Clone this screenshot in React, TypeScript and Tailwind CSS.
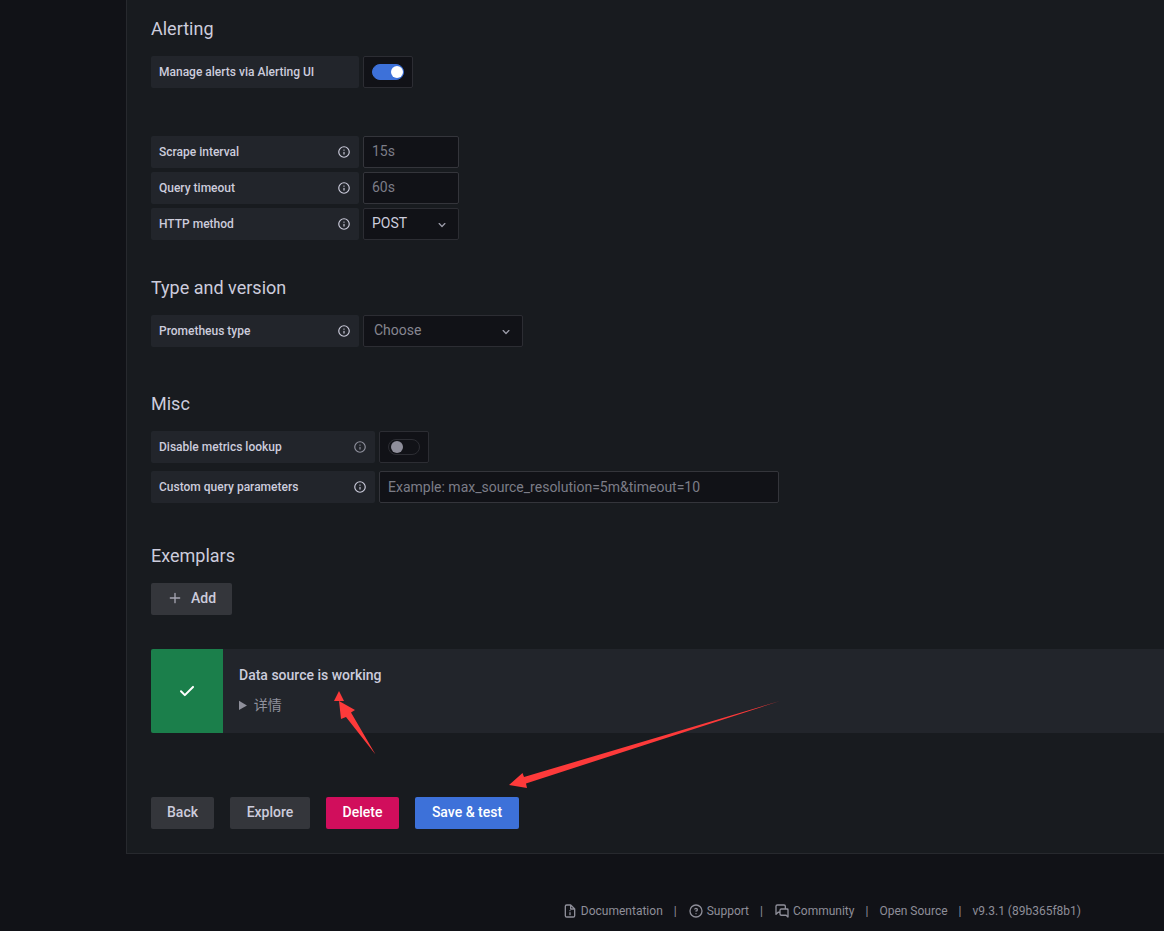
import type { ReactNode } from "react";

const ICONS = {
  info: "M12,2A10,10,0,1,0,22,12,10,10,0,0,0,12,2Zm0,18a8,8,0,1,1,8-8A8,8,0,0,1,12,20Zm0-8.5a1,1,0,0,0-1,1v3a1,1,0,0,0,2,0v-3A1,1,0,0,0,12,11.5Zm0-4a1.25,1.25,0,1,0,1.25,1.25A1.25,1.25,0,0,0,12,7.5Z",
  angleDown:
    "M17,9.17a1,1,0,0,0-1.41,0L12,12.71,8.46,9.17a1,1,0,0,0-1.41,0,1,1,0,0,0,0,1.42l4.24,4.24a1,1,0,0,0,1.42,0L17,10.59A1,1,0,0,0,17,9.17Z",
  plus: "M19,11H13V5a1,1,0,0,0-2,0v6H5a1,1,0,0,0,0,2h6v6a1,1,0,0,0,2,0V13h6a1,1,0,0,0,0-2Z",
  check:
    "M18.71,7.21a1,1,0,0,0-1.42,0L9.84,14.67,6.71,11.53A1,1,0,1,0,5.29,13l3.84,3.84a1,1,0,0,0,1.42,0l8.16-8.16A1,1,0,0,0,18.71,7.21Z",
  question:
    "M11.29,15.29a1.58,1.58,0,0,0-.12.15.76.76,0,0,0-.09.18.64.64,0,0,0-.06.18,1.36,1.36,0,0,0,0,.2.84.84,0,0,0,.08.38.9.9,0,0,0,.54.54.94.94,0,0,0,.76,0,.9.9,0,0,0,.54-.54A1,1,0,0,0,13,16a1,1,0,0,0-.29-.71A1,1,0,0,0,11.29,15.29ZM12,2A10,10,0,1,0,22,12,10,10,0,0,0,12,2Zm0,18a8,8,0,1,1,8-8A8,8,0,0,1,12,20ZM12,7A3,3,0,0,0,9.4,8.5a1,1,0,1,0,1.73,1A1,1,0,0,1,12,9a1,1,0,0,1,0,2,1,1,0,1,0,0,2,3,3,0,0,0,0-6Z",
  comments:
    "M20,8H18V5a3,3,0,0,0-3-3H5A3,3,0,0,0,2,5V17a1,1,0,0,0,.62.92A.84.84,0,0,0,3,18a1,1,0,0,0,.71-.29l2.81-2.82H8v1.44a3,3,0,0,0,3,3h6.92l2.37,2.38A1,1,0,0,0,21,22a.84.84,0,0,0,.38-.08A1,1,0,0,0,22,21V10A2,2,0,0,0,20,8ZM8,11v1.89H6.11a1,1,0,0,0-.71.29L4,14.59V5A1,1,0,0,1,5,4H15a1,1,0,0,1,1,1V8H11A3,3,0,0,0,8,11Zm12,7.59-1-1a1,1,0,0,0-.71-.3H11a1,1,0,0,1-1-1V11a1,1,0,0,1,1-1h8a1,1,0,0,1,1,1Z",
  fileInfo:
    "M20,8.94a1.31,1.31,0,0,0-.06-.27l0-.09a1.07,1.07,0,0,0-.19-.28h0l-6-6h0a1.07,1.07,0,0,0-.28-.19l-.1,0A1.1,1.1,0,0,0,13.06,2H7A3,3,0,0,0,4,5V19a3,3,0,0,0,3,3H17a3,3,0,0,0,3-3V9S20,9,20,8.94ZM14,5.41,16.59,8H14ZM18,19a1,1,0,0,1-1,1H7a1,1,0,0,1-1-1V5A1,1,0,0,1,7,4h5V9a1,1,0,0,0,1,1h5ZM12,10.500a1,1,0,1,0,1,1A1,1,0,0,0,12,10.500ZM12,13.500a1,1,0,0,0-1,1v3a1,1,0,0,0,2,0v-3A1,1,0,0,0,12,13.500Z",
};

function Icon({ name, className }: { name: keyof typeof ICONS; className: string }) {
  return (
    <svg viewBox="0 0 24 24" fill="currentColor" aria-hidden="true" className={className}>
      <path d={ICONS[name]} />
    </svg>
  );
}

function Heading({ children }: { children: ReactNode }) {
  return <h3 className="mb-4 text-lg leading-[22px]">{children}</h3>;
}

type FieldProps = {
  id: string;
  label: string;
  wide?: boolean;
  info?: boolean;
  dim?: boolean;
  children: ReactNode;
};

function Field({ id, label, wide, info, dim, children }: FieldProps) {
  return (
    <div className="flex gap-1">
      <label
        htmlFor={id}
        className={`flex h-8 shrink-0 items-center justify-between rounded-xs bg-[#22252b] px-2 text-xs font-medium ${
          wide ? "w-56" : "w-52"
        }`}
      >
        {label}
        {info && <Icon name="info" className={dim ? "size-3.5 opacity-65" : "size-3.5"} />}
      </label>
      {children}
    </div>
  );
}

function Switch({ id, on }: { id: string; on?: boolean }) {
  return (
    <div className="flex h-8 w-[50px] items-center justify-center rounded-xs border border-[#2c2d33] bg-[#111217]">
      <input
        id={id}
        type="checkbox"
        role="switch"
        defaultChecked={on}
        className="flex h-4 w-8 appearance-none items-center rounded-full border border-[#2c2d33] pl-0.5 before:size-3 before:rounded-full before:bg-[#8e8e9a] checked:justify-end checked:border-[#3d71d9] checked:bg-[#3d71d9] checked:before:bg-white"
      />
    </div>
  );
}

function TextInput({ id, placeholder, className }: { id: string; placeholder: string; className: string }) {
  return (
    <input
      id={id}
      type="text"
      placeholder={placeholder}
      className={`h-8 rounded-xs border border-[#34353b] bg-[#111217] px-2 text-sm placeholder:text-[#7c7d87] ${className}`}
    />
  );
}

function Select({ id, value, className }: { id: string; value: string; className: string }) {
  return (
    <div className="relative flex items-center">
      <select
        id={id}
        className={`h-8 appearance-none rounded-xs border border-[#2c2d33] bg-[#111217] pb-0.5 text-sm ${className}`}
      >
        <option>{value}</option>
      </select>
      <Icon name="angleDown" className="pointer-events-none absolute top-[9px] right-[9px] size-4 text-[#9b9ba8]" />
    </div>
  );
}

function Button({ className, children }: { className: string; children: ReactNode }) {
  return (
    <button type="button" className={`flex h-8 items-center justify-center rounded-xs pb-0.5 text-sm font-medium ${className}`}>
      {children}
    </button>
  );
}

function FooterLink({ icon, children }: { icon?: keyof typeof ICONS; children: ReactNode }) {
  return (
    <a href="#" className="flex items-center gap-[3px]">
      {icon && <Icon name={icon} className="size-4" />}
      {children}
    </a>
  );
}

// Red marker arrows drawn over the alert and the action buttons
function Arrows() {
  return (
    <svg
      viewBox="0 0 640 150"
      fill="#fd3a3a"
      aria-hidden="true"
      className="pointer-events-none absolute top-0 left-0 h-[150px] w-[640px]"
    >
      <path d="M188 42L193 52H183Z" />
      <path d="M188 52L204 61L200 63.500L224.500 105.500L195 68L190 70Z" />
      <path d="M358 136L371.500 124L373 128L629 52L375 134.500L376 139Z" />
    </svg>
  );
}

export default function App() {
  return (
    <div className="min-h-screen bg-[#111217] pl-[126px] font-[Roboto,'Noto_Sans_CJK_SC',sans-serif] text-[#ccccdc]">
      <main className="border-b border-l border-[#27292e] bg-[#181b1f] pt-[18px] pb-6 pl-6">
        <section>
          <Heading>Alerting</Heading>
          <Field id="manage-alerts" label="Manage alerts via Alerting UI">
            <Switch id="manage-alerts" on />
          </Field>
        </section>

        <section className="mt-12 flex flex-col gap-1">
          <Field id="scrape" label="Scrape interval" info>
            <TextInput id="scrape" placeholder="15s" className="w-24 pb-0.5" />
          </Field>
          <Field id="timeout" label="Query timeout" info>
            <TextInput id="timeout" placeholder="60s" className="w-24 pb-0.5" />
          </Field>
          <Field id="method" label="HTTP method" info>
            <Select id="method" value="POST" className="w-24 pl-2" />
          </Field>
        </section>

        <section className="mt-[37px]">
          <Heading>Type and version</Heading>
          <Field id="prom-type" label="Prometheus type" info>
            <Select id="prom-type" value="Choose" className="w-40 pl-2.5 text-[#868690]" />
          </Field>
        </section>

        <section className="mt-[46px]">
          <Heading>Misc</Heading>
          <div className="flex flex-col gap-2">
            <Field id="lookup" label="Disable metrics lookup" wide info dim>
              <Switch id="lookup" />
            </Field>
            <Field id="params" label="Custom query parameters" wide info>
              <TextInput
                id="params"
                placeholder="Example: max_source_resolution=5m&timeout=10"
                className="w-[400px]"
              />
            </Field>
          </div>
        </section>

        <section className="mt-[42px]">
          <Heading>Exemplars</Heading>
          <Button className="w-[81px] gap-2 bg-[#34363b]">
            <Icon name="plus" className="size-4 text-[#a5a5b2]" />
            Add
          </Button>
        </section>

        <div className="relative mt-[34px]">
          <div role="status" className="flex h-[84px] overflow-hidden rounded-l-xs bg-[#22252b]">
            <div className="flex w-[72px] items-center justify-center bg-[#1b7f4b] text-white">
              <Icon name="check" className="size-6" />
            </div>
            <div className="flex flex-col gap-2 px-4 py-[15px] text-sm leading-[22px]">
              <p className="font-medium">Data source is working</p>
              <details className="text-[#8f909b]">
                <summary>详情</summary>
              </details>
            </div>
          </div>

          <div className="mt-16 flex gap-4">
            <Button className="w-[63px] bg-[#34363b]">Back</Button>
            <Button className="w-20 bg-[#34363b]">Explore</Button>
            <Button className="w-[73px] bg-[#d10e5c] text-white">Delete</Button>
            <Button className="w-[104px] bg-[#3d71d9] text-white">Save &amp; test</Button>
          </div>
          <Arrows />
        </div>
      </main>

      <footer className="flex justify-end gap-[11px] pt-12 pr-[83px] pb-3 text-xs leading-[18px] text-[#8e8e99]">
        <FooterLink icon="fileInfo">Documentation</FooterLink>
        <span>|</span>
        <FooterLink icon="question">Support</FooterLink>
        <span>|</span>
        <FooterLink icon="comments">Community</FooterLink>
        <span>|</span>
        <FooterLink>Open Source</FooterLink>
        <span>|</span>
        <FooterLink>v9.3.1 (89b365f8b1)</FooterLink>
      </footer>
    </div>
  );
}
